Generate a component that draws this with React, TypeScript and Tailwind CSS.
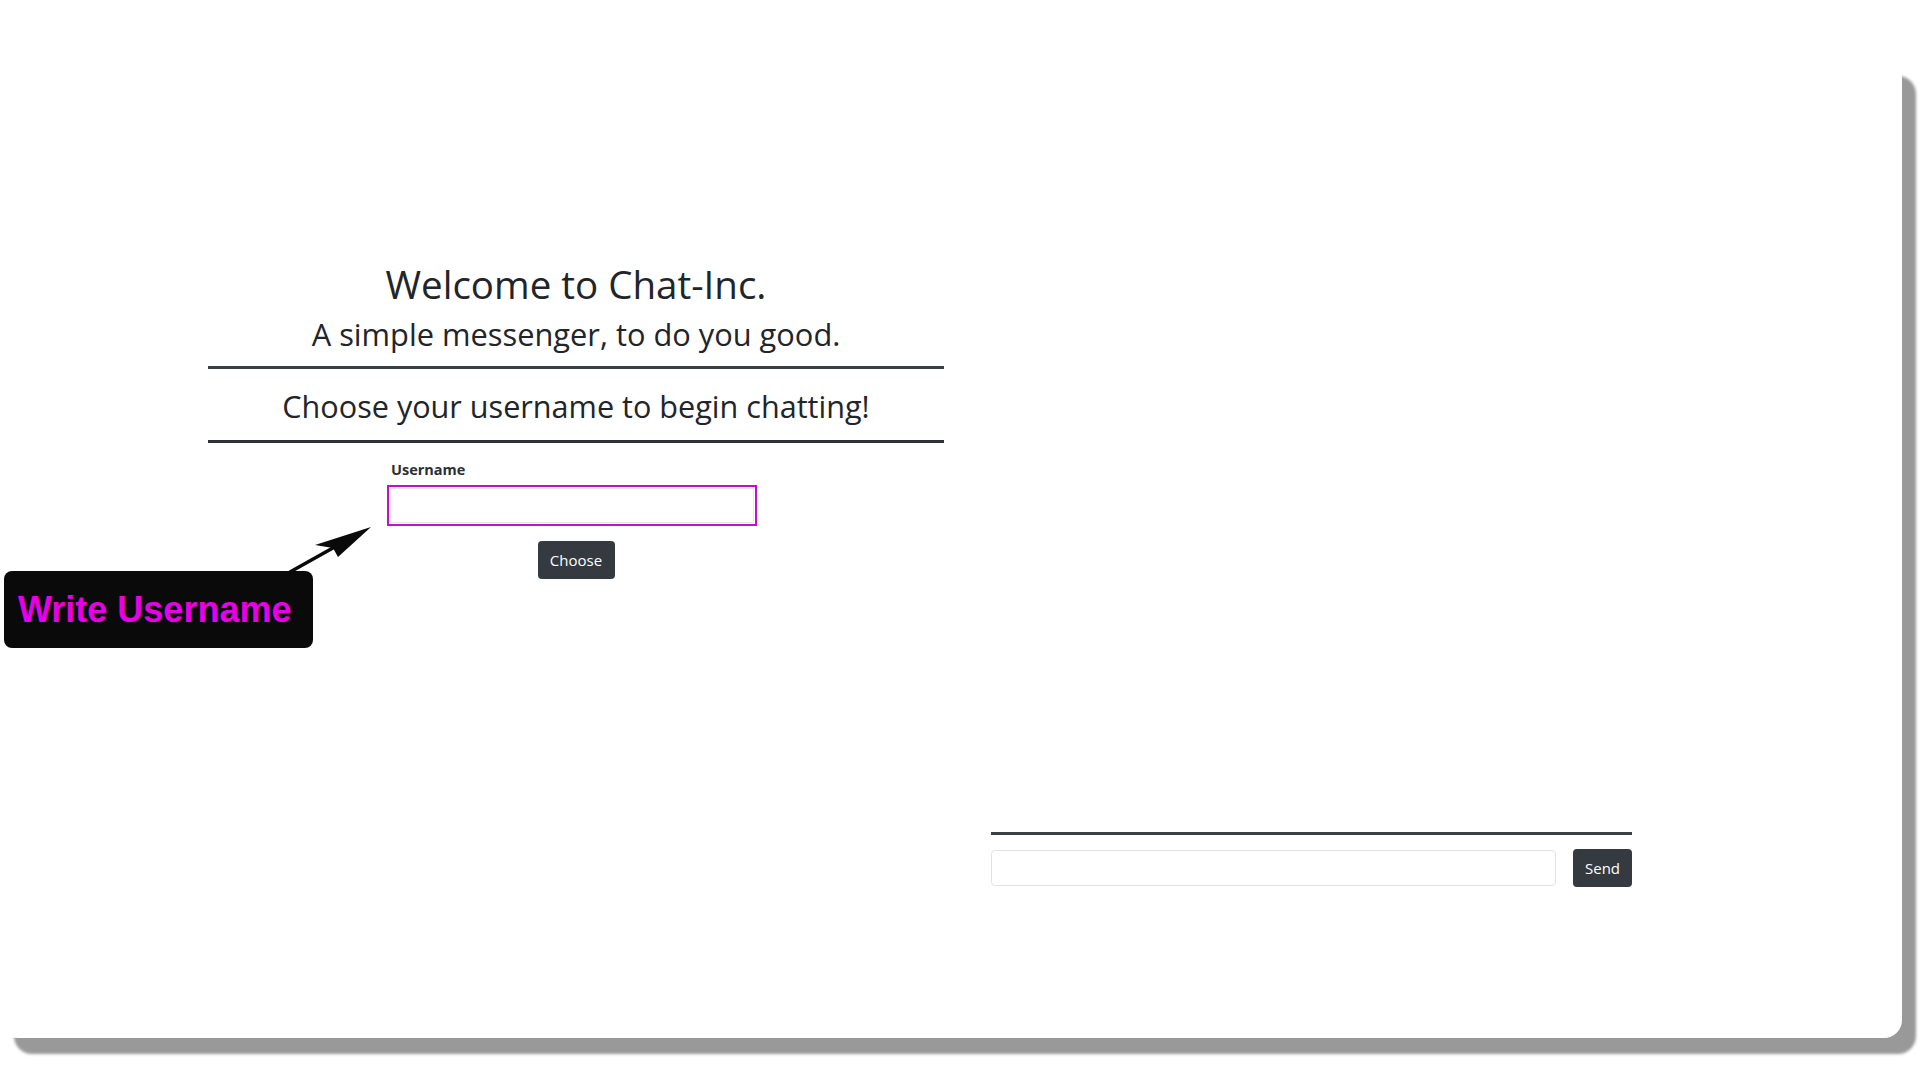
import React from "react";

export default function App() {
  return (
    <div
      className="relative w-[1920px] h-[1080px] overflow-hidden bg-white text-[#212529]"
      style={{ fontFamily: '"Open Sans", "Noto Sans", sans-serif' }}
    >
      <div className="mt-[60px] ml-0 w-[1902px] h-[978px] rounded-[18px] bg-white shadow-[14px_16px_3px_#999999] flex">
        {/* Left column */}
        <div className="ml-[208px] w-[736px] pt-[201px] flex flex-col">
          <h1 className="text-center text-[38.5px] leading-[46px] font-normal">Welcome to Chat-Inc.</h1>
          <h3 className="mt-[9px] text-center text-[30.8px] leading-[36px] font-normal">
            A simple messenger, to do you good.
          </h3>
          <div className="mt-[14px] h-[3px] bg-[#3b4045]" />
          <h3 className="mt-[19px] text-center text-[30.6px] leading-[36px] font-normal">
            Choose your username to begin chatting!
          </h3>
          <div className="mt-[16px] h-[3px] bg-[#2f3337]" />
          <div className="ml-[179px] w-[370px] mt-[17px] flex flex-col">
            <label className="pl-[4px] text-[14.5px] leading-[20px] font-bold text-[#2b2f33]">Username</label>
            <div className="mt-[5px] h-[41px] border-2 border-[#c010c8] bg-white p-[1px]">
              <div className="h-full w-full border border-[#e6e8ec]" />
            </div>
          </div>
          <div className="mt-[15px] flex justify-center">
            <button className="w-[77px] h-[38px] rounded-[4px] bg-[#343a40] text-white text-[15px] leading-none">
              Choose
            </button>
          </div>
        </div>

        {/* Right column */}
        <div className="ml-[47px] w-[641px] pt-[772px] flex flex-col">
          <div className="h-[3px] bg-[#3b4045]" />
          <div className="mt-[14px] flex items-center gap-[17px]">
            <div className="w-[565px] h-[36px] rounded-[4px] border border-[#dfe3e8] bg-white" />
            <button className="w-[59px] h-[38px] rounded-[4px] bg-[#343a40] text-white text-[15px] leading-none">
              Send
            </button>
          </div>
        </div>
      </div>

      {/* Annotation callout */}
      <div className="absolute left-[4px] top-[571px] w-[309px] h-[77px] rounded-[8px] bg-[#0a0a0a] flex items-center pl-[14px]">
        <span
          className="text-[36px] leading-none font-bold text-[#e600e6]"
          style={{ fontFamily: '"Liberation Sans", Arial, sans-serif' }}
        >
          Write Username
        </span>
      </div>

      {/* Arrow */}
      <svg className="absolute left-[280px] top-[520px]" width="100" height="60" viewBox="0 0 100 60">
        <line x1="10" y1="52" x2="60" y2="24" stroke="#0a0a0a" strokeWidth="3.5" strokeLinecap="round" />
        <polygon points="91,7 35,25 53,28 58,37" fill="#0a0a0a" />
      </svg>
    </div>
  );
}
